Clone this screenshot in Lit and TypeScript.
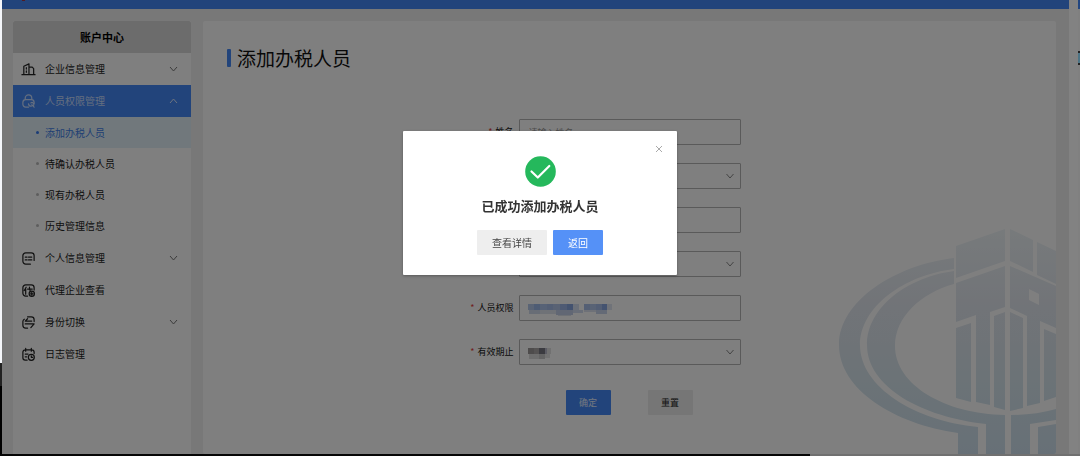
import { LitElement, html, svg, css, nothing } from "lit";
import { customElement, state } from "lit/decorators.js";

const ICONS: Record<string, unknown> = {
  building: svg`<path d="M3 13.500V4.500L8.500 2v11.500M8.500 5.500H12l1.500 1.500v6.500M1 13.500h14M5.700 6v1.500M5.700 9.500v1.500"/>`,
  lock: svg`<path d="M4.500 6V4.500a3.500 3.500 0 0 1 7 0V6M8 14H5a3 3 0 0 1-3-3V9a3 3 0 0 1 3-3h6a3 3 0 0 1 3 3v1"/><path d="M8 10.500a3 3 0 0 0 3 2.500M10.500 9.500a2 2 0 0 1 3 2.500M11.500 11.500l2.500 2.500"/>`,
  card: svg`<path d="M10 14H5a3 3 0 0 1-3-3V5a3 3 0 0 1 3-3h6a3 3 0 0 1 3 3v5M4.500 6.500h2M8 6.500h3.500M4.500 9.500h2M8 9.500h3.500"/>`,
  agent: svg`<path d="M7 14H5a3 3 0 0 1-3-3V5a3 3 0 0 1 3-3h6a3 3 0 0 1 3 3v2.500M5.500 4.500L3.500 8M5 6.500V12M7 6.500h5M9 4.500c0 2 .5 4 1.500 5"/><circle cx="11.500" cy="11.500" r="2.800"/><path d="M10 11.500h3M11.500 10v3"/>`,
  swap: svg`<path d="M7 2h4a3 3 0 0 1 3 3v2M11.500 6.500H4.500L7 4M3.500 4.500A3 3 0 0 0 2 7v4a3 3 0 0 0 3 3h2M4.500 9.500H14l-3.500 4"/>`,
  log: svg`<path d="M6.500 14H4.500A2.500 2.500 0 0 1 2 11.500v-6A2.500 2.500 0 0 1 4.500 3h7A2.500 2.500 0 0 1 14 5.500V7M5 1.500v3M11 1.500v3M4.500 7.500h3M4.500 10.500h1.500"/><circle cx="11" cy="11" r="3.200"/><path d="M11 9.500V11h1.500"/>`,
};

const icon = (name: string) =>
  html`<svg class="icon" viewBox="0 0 16 16" aria-hidden="true">${ICONS[name]}</svg>`;
const chevron = (up = false) =>
  html`<svg class="chevron" viewBox="0 0 8 6" aria-hidden="true"><path d=${up ? "M.5 5 4 1l3.500 4" : "M.5 1 4 5l3.500-4"} /></svg>`;

interface MenuItem { label: string; icon: string; group?: boolean; children?: string[] }

const MENU: MenuItem[] = [
  { label: "企业信息管理", icon: "building", group: true },
  {
    label: "人员权限管理", icon: "lock", group: true,
    children: ["添加办税人员", "待确认办税人员", "现有办税人员", "历史管理信息"],
  },
  { label: "个人信息管理", icon: "card", group: true },
  { label: "代理企业查看", icon: "agent" },
  { label: "身份切换", icon: "swap", group: true },
  { label: "日志管理", icon: "log" },
];

@customElement("side-menu")
export class SideMenu extends LitElement {
  static styles = css`
    :host { display: block; background: #fff; }
    .title { margin: 0; height: 32px; line-height: 32px; font-size: 11px; text-align: center; background: #d8d8d8; color: #000; border-radius: 2px 2px 0 0; }
    ul { list-style: none; margin: 0; padding: 0; }
    .submenu { padding-bottom: 1px; }
    a { display: flex; align-items: center; box-sizing: border-box; height: 32px; padding: 0 13px 0 8px; font-size: 10px; line-height: 16px; color: #222; text-decoration: none; }
    .icon { width: 15px; height: 15px; margin-right: 9px; fill: none; stroke: currentColor; stroke-width: 1.3; stroke-linecap: round; stroke-linejoin: round; }
    .label { flex: 1; }
    .chevron { width: 9px; height: 6px; fill: none; stroke: #777; }
    .open { background: #4589f7; color: #c8dcff; }
    .open .chevron { stroke: #dde9ff; }
    .sub { height: 31px; padding-left: 23px; }
    .sub::before { content: ""; width: 3px; height: 3px; margin-right: 6px; border-radius: 50%; background: #bbb; }
    .current { background: #e3f1f8; color: #4080e8; }
    .current::before { background: #3478ee; }
  `;
  render() {
    return html`
      <h2 class="title">账户中心</h2>
      <ul>
        ${MENU.map((m) => html`
          <li>
            <a href="#" class=${m.children ? "open" : ""}>
              ${icon(m.icon)}<span class="label">${m.label}</span>${m.group ? chevron(!!m.children) : nothing}
            </a>
            ${m.children
              ? html`<ul class="submenu">${m.children.map((c, i) => html`<li><a href="#" class="sub ${i === 0 ? "current" : ""}">${c}</a></li>`)}</ul>`
              : nothing}
          </li>`)}
      </ul>`;
  }
}

@customElement("person-form")
export class PersonForm extends LitElement {
  static styles = css`
    :host { display: block; }
    form { display: grid; grid-template-columns: 1fr 222px 1fr; column-gap: 5px; row-gap: 18px; }
    label { grid-column: 1; text-align: right; font-size: 9px; line-height: 26px; color: #111; }
    label::before { content: "*"; color: #e04040; margin-right: 3px; }
    .field { grid-column: 2; position: relative; }
    input, select { display: block; box-sizing: border-box; width: 100%; height: 26px; margin: 0; padding: 0 9px; border: 1px solid #b4b4b4; border-radius: 1px; background: transparent; font: inherit; font-size: 9px; color: #333; outline: none; appearance: none; }
    input::placeholder { color: #999; opacity: 1; }
    .chevron { position: absolute; right: 7px; top: 10px; width: 8px; height: 6px; fill: none; stroke: #888; pointer-events: none; }
    .redacted { position: absolute; left: 9px; top: 8px; height: 13px; pointer-events: none; }
    .wide { width: 85px; }
    .narrow { width: 23px; }
    .actions { grid-column: 2; display: flex; gap: 37px; padding: 7px 0 0 47px; }
    button { width: 45px; height: 25px; padding: 0; border: 0; border-radius: 1px; font: inherit; font-size: 9px; background: #ececec; color: #222; }
    .primary { background: #4589f7; color: #e6f0ff; }
  `;
  private mosaic(kind: string, cells: [number, number, number, number, string][], w: number) {
    return html`<svg class="redacted ${kind}" viewBox="0 0 ${w} 13" aria-hidden="true">
      ${cells.map(([x, y, cw, h, c]) => svg`<rect x=${x} y=${y} width=${cw} height=${h} fill=${c} />`)}</svg>`;
  }
  render() {
    return html`<form @submit=${(e: Event) => e.preventDefault()}>
      <label for="name">姓名</label>
      <div class="field"><input id="name" placeholder="请输入姓名" /></div>
      <div class="field"><select aria-label="证件类型"><option></option></select>${chevron()}</div>
      <div class="field"><input aria-label="证件号码" /></div>
      <div class="field"><select aria-label="人员身份"><option></option></select>${chevron()}</div>
      <label for="scope">人员权限</label>
      <div class="field"><input id="scope" />
        ${this.mosaic("wide", [
          [0, 1, 6, 6, "#b5c8ea"], [6, 1, 6, 6, "#9db8e8"], [12, 1, 7, 6, "#afc4ec"], [19, 1, 6, 6, "#a6bce8"],
          [25, 1, 7, 6, "#b2c4e8"], [32, 1, 7, 6, "#9db5e6"], [39, 1, 6, 6, "#86a4df"], [45, 1, 6, 6, "#d7e0f2"],
          [56, 1, 6, 6, "#a8bee8"], [62, 1, 6, 6, "#b3c6ea"], [68, 1, 6, 6, "#a6bce8"], [74, 1, 5, 6, "#89a7e0"], [79, 1, 5, 6, "#e0e6f2"],
          [1, 7, 11, 4, "#d0daed"], [12, 7, 16, 4, "#dfe4ee"], [28, 7, 17, 5, "#c2cee8"], [45, 7, 10, 3, "#d2dcf0"],
          [56, 7, 12, 2, "#dce3f0"], [68, 7, 11, 4, "#c8d5ed"], [30, 12, 13, 1, "#dde2ed"]], 85)}
      </div>
      <label for="until">有效期止</label>
      <div class="field"><select id="until"><option></option></select>
        ${this.mosaic("narrow", [
          [0, 1, 6, 6, "#9c9898"], [6, 1, 5, 6, "#aaa6a6"], [11, 1, 6, 6, "#777780"], [17, 1, 2, 6, "#b8b8c8"], [19, 1, 4, 6, "#e2e2e2"],
          [1, 7, 10, 5, "#dcdcdc"], [11, 7, 6, 5, "#c8c8c8"], [17, 7, 5, 4, "#e5e5e5"]], 23)}
        ${chevron()}
      </div>
      <div class="actions">
        <button class="primary" type="submit">确定</button><button type="reset">重置</button>
      </div>
    </form>`;
  }
}

@customElement("success-dialog")
export class SuccessDialog extends LitElement {
  static styles = css`
    :host { display: block; }
    .dialog { position: relative; display: flex; flex-direction: column; align-items: center; box-sizing: border-box; width: 274px; padding: 25px 0 20px; background: #fff; border-radius: 1px; box-shadow: 0 1px 3px rgb(0 0 0 / 30%); }
    .close { position: absolute; right: 12px; top: 12px; width: 12px; height: 12px; padding: 2px; border: 0; background: none; }
    .close svg { display: block; width: 8px; height: 8px; stroke: #aaa; fill: none; }
    .tick { display: block; width: 31px; height: 31px; }
    h2 { margin: 9px 0 14px; font-size: 13px; line-height: 20px; color: #333; }
    .actions { display: flex; gap: 6px; }
    .actions button { height: 25px; padding: 0 15px; border: 0; border-radius: 1px; background: #eee; color: #444; font: inherit; font-size: 10px; }
    .actions .primary { background: #5591f7; color: #fff; }
  `;
  render() {
    return html`<div class="dialog" role="dialog" aria-modal="true" aria-labelledby="msg">
      <button class="close" aria-label="关闭" @click=${() => this.dispatchEvent(new CustomEvent("dismiss"))}>
        <svg viewBox="0 0 8 8"><path d="m1 1 6 6M7 1 1 7" /></svg>
      </button>
      <svg class="tick" viewBox="0 0 31 31" aria-hidden="true">
        <circle cx="15.500" cy="15.500" r="15.300" fill="#25b85c" />
        <path d="M6.500 15.500l6.300 6L24.300 10" fill="none" stroke="#fff" stroke-width="2.200" stroke-linecap="round" stroke-linejoin="round" />
      </svg>
      <h2 id="msg">已成功添加办税人员</h2>
      <div class="actions">
        <button>查看详情</button>
        <button class="primary" @click=${() => this.dispatchEvent(new CustomEvent("dismiss"))}>返回</button>
      </div>
    </div>`;
  }
}

@customElement("app-root")
export class AppRoot extends LitElement {
  @state() private open = true;

  static styles = css`
    :host { display: block; font-family: "Noto Sans CJK SC", "Noto Sans", sans-serif; }
    .screen { display: grid; grid-template-columns: 2px 1fr 9px 2px; grid-template-rows: 1fr 2px; height: 100vh; overflow: hidden; background: #000; }
    .edge { background: linear-gradient(#f4f6fa 0 80%, #222 80% 85%, #000 85%); }
    .page { position: relative; display: flex; flex-direction: column; min-height: 0; overflow: hidden; background: #f0f0f0; }
    .topbar { flex: none; height: 9px; background: #4589f7; }
    .topbar::before { content: ""; display: block; width: 3px; height: 1px; margin-left: 20px; background: #a03848; }
    .body { flex: 1; display: flex; gap: 12px; min-height: 0; padding: 12px 13px 0 11px; }
    side-menu { flex: none; width: 178px; }
    main { position: relative; flex: 1; padding: 24px; border-radius: 2px; background: #fff; overflow: hidden; }
    h1 { display: flex; align-items: center; gap: 6px; margin: 0 0 48px; font-size: 19px; line-height: 26px; font-weight: 400; color: #111; }
    h1::before { content: ""; width: 4px; height: 18px; background: #4589f7; border-radius: 1px; }
    .emblem { position: absolute; right: 0; bottom: 0; width: 218px; height: 226px; }
    .shade { position: absolute; inset: 0; background: rgb(0 0 0 / 50%); }
    .scrollbar { background: #828282; }
    .sliver { background: linear-gradient(#224680 0 9px, #808080 9px 51px, #222 51px 53px, #4d7485 53px 63px, #222 63px 65px, #808080 65px); }
    .bottom { grid-column: 1 / -1; background: linear-gradient(90deg, #050505 75%, #707070 75%); }
    success-dialog { position: fixed; left: 50%; top: 131px; transform: translateX(-50%); }
    person-form { position: relative; }
  `;

  render() {
    return html`<div class="screen">
      <div class="edge"></div>
      <div class="page">
        <header class="topbar"></header>
        <div class="body">
          <side-menu></side-menu>
          <main>
            <svg class="emblem" viewBox="838 228 218 226" aria-hidden="true">
              <defs>
                <linearGradient id="tone" gradientUnits="userSpaceOnUse" x1="0" y1="228" x2="0" y2="454">
                  <stop offset="0" stop-color="#eff5f8" /><stop offset=".35" stop-color="#e3e8f0" />
                  <stop offset=".7" stop-color="#d7e6ee" /><stop offset="1" stop-color="#cfe1ee" />
                </linearGradient>
              </defs>
              <g fill="url(#tone)">
                <path d="M954 258C895 265 839 301 839 345c0 45 56 79 119 88v21h20v-27c-63-6-118-40-118-82 0-38 44-70 94-76z" />
                <path d="M954 271c-46 6-87 36-87 74 0 42 55 72 119 79v30h19v-39c-60-1-110-30-110-69 0-29 26-53 59-62z" />
                <path d="M956 246l49-17v32l-49 17zM1010 229l23 11v32l-23-11zM1037 242l19 9v33l-19-9z" />
                <path d="M956 283l49-17v41l-15 5v93l-14-3v-87l-20 7z" />
                <path fill-rule="evenodd" d="M1010 266l46 20v42l-16-7v82l-13 3v-90l-17-8zM1029 289v11l10 5v-11z" />
                <path d="M956 328l15-5v79l-15-4zM994 316l11-4v98l-11-3zM1010 312l13 6v90l-13 3zM1044 329l12 5v63l-12 4z" />
                <path d="M1011 415q24 0 45-6v11l-26 4v30h-19zM1038 427l18-3v30h-18z" />
              </g>
            </svg>
            <h1>添加办税人员</h1>
            <person-form></person-form>
          </main>
        </div>
        ${this.open ? html`<div class="shade"></div>` : nothing}
      </div>
      <div class="scrollbar"></div>
      <div class="sliver"></div>
      <div class="bottom"></div>
      ${this.open ? html`<success-dialog @dismiss=${() => (this.open = false)}></success-dialog>` : nothing}
    </div>`;
  }
}
